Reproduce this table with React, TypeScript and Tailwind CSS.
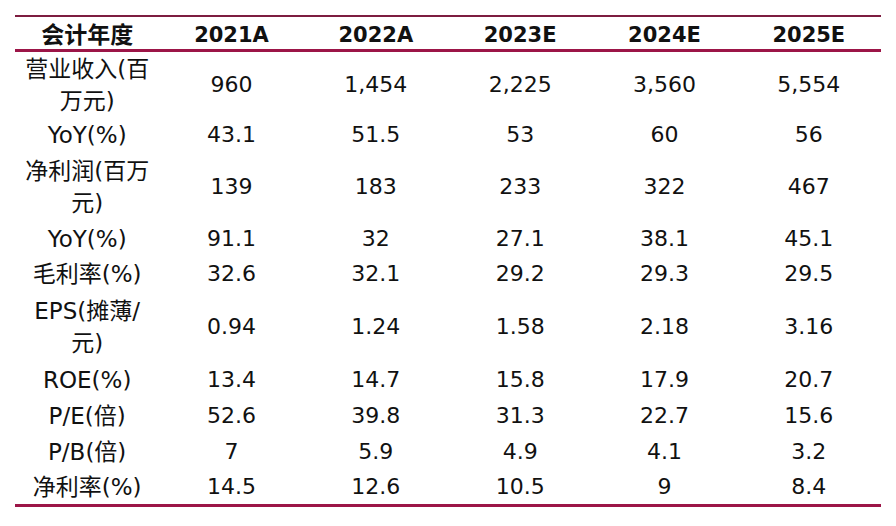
type Row = { label: string[]; values: string[]; h: string }

const years = ['2021A', '2022A', '2023E', '2024E', '2025E']

const rows: Row[] = [
  { label: ['营业收入(百', '万元)'], values: ['960', '1,454', '2,225', '3,560', '5,554'], h: 'h-[66px]' },
  { label: ['YoY(%)'], values: ['43.1', '51.5', '53', '60', '56'], h: 'h-[34px]' },
  { label: ['净利润(百万', '元)'], values: ['139', '183', '233', '322', '467'], h: 'h-[70px]' },
  { label: ['YoY(%)'], values: ['91.1', '32', '27.1', '38.1', '45.1'], h: 'h-[34px]' },
  { label: ['毛利率(%)'], values: ['32.6', '32.1', '29.2', '29.3', '29.5'], h: 'h-[36px]' },
  { label: ['EPS(摊薄/', '元)'], values: ['0.94', '1.24', '1.58', '2.18', '3.16'], h: 'h-[70px]' },
  { label: ['ROE(%)'], values: ['13.4', '14.7', '15.8', '17.9', '20.7'], h: 'h-[36px]' },
  { label: ['P/E(倍)'], values: ['52.6', '39.8', '31.3', '22.7', '15.6'], h: 'h-[36px]' },
  { label: ['P/B(倍)'], values: ['7', '5.9', '4.9', '4.1', '3.2'], h: 'h-[36px]' },
  { label: ['净利率(%)'], values: ['14.5', '12.6', '10.5', '9', '8.4'], h: 'h-[34px]' },
]

// Forecast table: six equal columns between two crimson rules.
export default function App() {
  return (
    <div
      className="w-[896px] h-[526px] bg-white pl-[15px] pt-[15px] text-[#111] text-[22px]"
      style={{ fontFamily: '"DejaVu Sans", "Noto Sans CJK SC", sans-serif' }}
    >
      <div className="w-[866px] border-t-2 border-t-[#7d1d40] border-b-[3px] border-b-[#9c1547]">
        {/* Header */}
        <div className="grid grid-cols-6 h-[35px] pt-[1px] items-center border-b-[3px] border-b-[#9c1547] font-bold text-[21px]">
          <div className="text-center text-[23px]">会计年度</div>
          {years.map(y => (
            <div key={y} className="text-center">{y}</div>
          ))}
        </div>

        {rows.map((r, i) => (
          <div key={i} className={`grid grid-cols-6 items-center ${r.h}`}>
            <div className="text-center text-[23px] leading-[32px]">
              {r.label.map((l, j) => (
                <div key={j}>{l}</div>
              ))}
            </div>
            {r.values.map((v, j) => (
              <div key={j} className="text-center leading-[32px]">{v}</div>
            ))}
          </div>
        ))}
      </div>
    </div>
  )
}
